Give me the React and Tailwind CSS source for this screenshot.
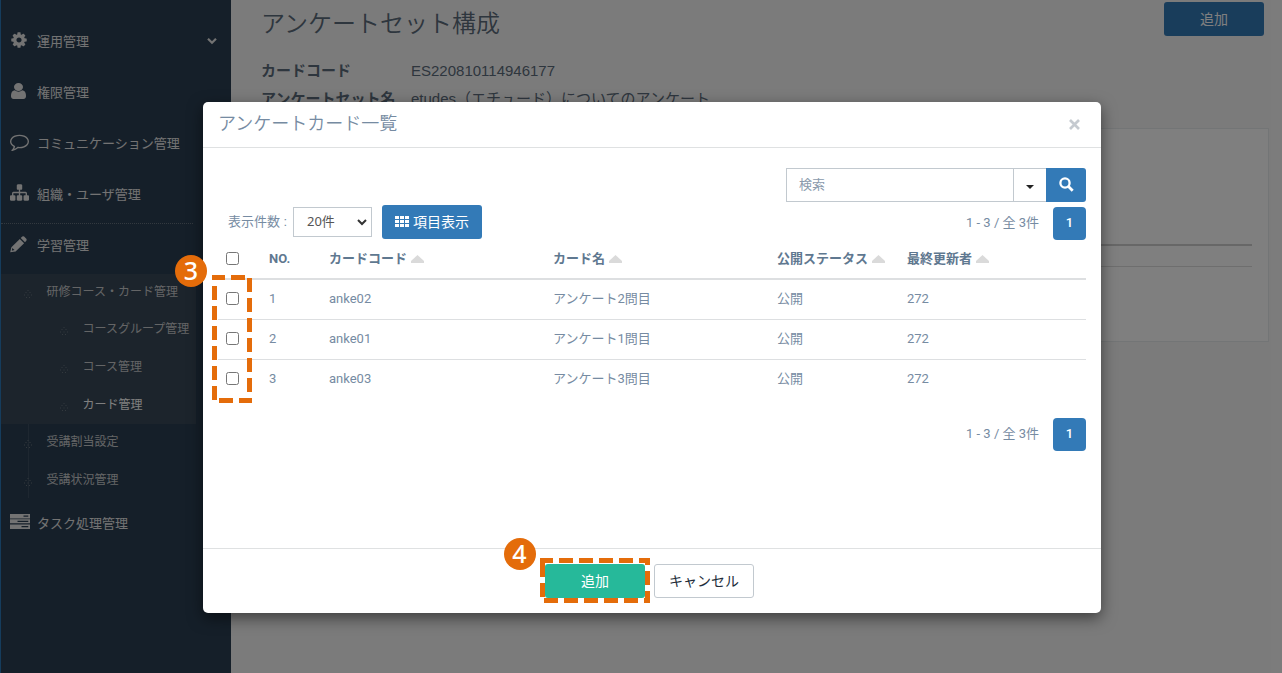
import React from 'react';

const JP = "font-['Liberation_Sans','Noto_Sans_CJK_JP',sans-serif]";

const ICONS = {
  cog: {
    box: '0 0 1792 1792',
    size: 'h-[18px] w-[18px]',
    d: 'M1152 896q0-106-75-181t-181-75-181 75-75 181 75 181 181 75 181-75 75-181zm512-109v222q0 12-8 23t-20 13l-185 28q-19 54-39 91 35 50 107 138 10 12 10 25t-9 23q-27 37-99 108t-94 71q-12 0-26-9l-138-108q-44 23-91 38-16 136-29 186-7 28-36 28h-222q-14 0-24.5-8.5t-11.5-21.5l-28-184q-49-16-90-37l-141 107q-10 9-25 9-14 0-25-11-126-114-165-168-7-10-7-23 0-12 8-23 15-21 51-66.5t54-70.5q-27-50-41-99l-183-27q-13-2-21-12.5t-8-23.5v-222q0-12 8-23t19-13l186-28q14-46 39-92-40-57-107-138-10-12-10-24 0-10 9-23 26-36 98.5-107.5t94.5-71.5q13 0 26 10l138 107q44-23 91-38 16-136 29-186 7-28 36-28h222q14 0 24.5 8.5t11.5 21.5l28 184q49 16 90 37l142-107q9-9 24-9 13 0 25 10 129 119 165 170 7 8 7 22 0 12-8 23-15 21-51 66.5t-54 70.5q26 50 41 98l183 28q13 2 21 12.5t8 23.5z',
  },
  user: {
    box: '256 128 1280 1536',
    size: 'ml-px h-4 w-[15px]',
    d: 'M1536 1399q0 109-62.5 187t-150.5 78h-854q-88 0-150.5-78t-62.5-187q0-85 8.5-160.500t31.500-152 58.500-131 94-89 134.500-34.500q131 128 313 128t313-128q76 0 134.500 34.500t94 89 58.500 131 31.500 152 8.500 160.500zm-256-887q0 159-112.500 271.500t-271.500 112.500-271.500-112.500-112.500-271.500 112.500-271.500 271.500-112.500 271.500 112.500 112.500 271.500z',
  },
  comment: {
    box: '0 0 1792 1792',
    size: 'h-[19px] w-[19px]',
    d: 'M896 384q-204 0-381.500 69.500t-282 187.500-104.500 255q0 112 71.500 213.500t201.500 175.500l87 50-27 96q-24 91-70 172 152-63 275-171l43-38 57 6q69 8 130 8 204 0 381.500-69.500t282-187.500 104.500-255-104.500-255-282-187.500-381.500-69.500zm896 512q0 174-120 321.500t-326 233-450 85.500q-70 0-145-8-198 175-460 242-49 14-114 22h-5q-15 0-27-10.500t-16-27.500v-1q-3-4-.5-12t2-10 4.500-9.500l6-9 7-8.500 8-9q7-8 31-34.500t34.500-38 31-39.500 32.500-51 27-59 26-76q-157-89-247.500-220t-90.500-281q0-174 120-321.500t326-233 450-85.500 450 85.500 326 233 120 321.500z',
  },
  sitemap: {
    box: '0 0 1792 1792',
    size: 'h-[19px] w-[19px]',
    d: 'M1792 1248v320q0 40-28 68t-68 28h-320q-40 0-68-28t-28-68v-320q0-40 28-68t68-28h96v-192h-512v192h96q40 0 68 28t28 68v320q0 40-28 68t-68 28h-320q-40 0-68-28t-28-68v-320q0-40 28-68t68-28h96v-192h-512v192h96q40 0 68 28t28 68v320q0 40-28 68t-68 28h-320q-40 0-68-28t-28-68v-320q0-40 28-68t68-28h96v-192q0-52 38-90t90-38h512v-192h-96q-40 0-68-28t-28-68v-320q0-40 28-68t68-28h320q40 0 68 28t28 68v320q0 40-28 68t-68 28h-96v192h512q52 0 90 38t38 90v192h96q40 0 68 28t28 68z',
  },
  pencil: {
    box: '0 0 17 17',
    size: 'h-[17px] w-[17px]',
    d: 'M.2 16.200 1.400 11.200 9.800 2.900 14.100 7.200 5.600 15.500ZM2.300 12.100 1.800 14.700 4.500 14.100ZM10.700 2 12.300.5Q13.200-.2 14.100.5L16.300 2.700Q17 3.700 16.300 4.700L15 6.300Z',
  },
  tasks: {
    box: '0 0 20 18',
    size: 'h-[18px] w-5',
    d: 'M0 1h20v4.500H0ZM13.500 2.600v1.200h4.800V2.600ZM0 6.300h20v4H0ZM7.500 7.700v1.200h10.800V7.700ZM0 11.500h20v4.500H0ZM11.500 13.100v1.200h6.800v-1.200Z',
  },
};

function NavIcon({ name }) {
  const { box, size, d } = ICONS[name];
  return (
    <svg viewBox={box} preserveAspectRatio="none" className={`shrink-0 ${size}`} fill="currentColor" fillRule="evenodd">
      <path d={d} />
    </svg>
  );
}

function NavItem({ icon, label, chevron, height = 'h-[51px]' }) {
  return (
    <li className={`flex items-center pl-[10px] pr-[14px] ${height}`}>
      <span className="flex w-[27px] items-center pb-[4px]">
        <NavIcon name={icon} />
      </span>
      <span className="grow">{label}</span>
      {chevron && (
        <svg viewBox="0 0 10 8" className="mb-px h-2 w-[10px]" fill="none" stroke="currentColor" strokeWidth="2.200">
          <path d="M1 1.800 5 5.800 9 1.800" />
        </svg>
      )}
    </li>
  );
}

function Dot() {
  return (
    <svg viewBox="0 0 8 8" className="mt-1 h-2 w-2 shrink-0" fill="#66727d">
      <path d="M3.500 0h1v1h-1ZM1.500 2h1v1h-1ZM5.500 2h1v1h-1ZM0 4.500h1v1H0ZM3.500 4.500h1v1h-1ZM7 4.500h1v1H7ZM2 7h1v1H2ZM5 7h1v1H5Z" />
    </svg>
  );
}

function SubItem({ label, deep, active, height }) {
  return (
    <li className={`flex items-center ${height} ${deep ? 'pl-[59px]' : 'pl-[23px]'} ${active ? 'text-[#fff]' : 'text-[#c8cacc]'}`}>
      <Dot />
      <span className="whitespace-nowrap pl-[14.500px] text-[12px]">{label}</span>
    </li>
  );
}

function Sidebar() {
  return (
    <aside className="w-[231px] shrink-0 border-l border-[#2a79b8] bg-[#2b3f53] pt-4 text-[13px] text-[#e6e6e6]">
      <ul className="-ml-px">
        <NavItem icon="cog" label="運用管理" chevron />
        <NavItem icon="user" label="権限管理" />
        <NavItem icon="comment" label="コミュニケーション管理" />
        <NavItem icon="sitemap" label="組織・ユーザ管理" />
      </ul>
      <div className="mt-[3px] w-[192px] border-t border-dotted border-[#67737f]" />
      <ul className="-ml-px">
        <NavItem icon="pencil" label="学習管理" height="h-[50px] pb-[6px]" />
      </ul>
      <ul className="h-[150px] w-[195px] bg-[#394858]">
        <SubItem label="研修コース・カード管理" height="h-[36px]" />
        <SubItem label="コースグループ管理" deep height="h-[38px]" />
        <SubItem label="コース管理" deep height="h-[38px]" />
        <SubItem label="カード管理" deep active height="h-[38px]" />
      </ul>
      <ul className="h-[74px] bg-[linear-gradient(#3c4e61,#3c4e61)] bg-[length:1px_100%] bg-[position:27px_0] bg-no-repeat">
        <SubItem label="受講割当設定" height="h-[36px]" />
        <SubItem label="受講状況管理" height="h-[40px]" />
      </ul>
      <ul className="-ml-px">
        <NavItem icon="tasks" label="タスク処理管理" />
      </ul>
    </aside>
  );
}

function Page() {
  return (
    <main className="min-w-0 grow bg-[#f7f7f7] pl-[30px] pr-[13px] text-[#5c6c7c]">
      <div className="flex h-[60px] items-start justify-between">
        <h1 className="pt-[6px] text-[24px] font-[350] leading-[36px]">アンケートセット構成</h1>
        <button className="mr-[5px] mt-[2px] h-[34px] w-[100px] rounded-[3px] bg-[#337ab7] text-[14px] text-white">追加</button>
      </div>
      <dl className="grid h-[68px] grid-cols-[150px_1fr] content-start text-[15px] leading-[22px]">
        <dt className="mb-[6px] font-bold">カードコード</dt>
        <dd>ES220810114946177</dd>
        <dt className="whitespace-nowrap font-bold">アンケートセット名</dt>
        <dd>etudes（エチュード）についてのアンケート</dd>
      </dl>
      <section className="h-[214px] border border-[#e7eaec] bg-white px-4 pt-[115px]">
        <div className="h-[23px] border-b border-t-2 border-b-[#dddddd] border-t-[#cfcfcf]" />
      </section>
    </main>
  );
}

function Checkbox() {
  return <span className="block h-[13px] w-[13px] rounded-[2.500px] border border-[#767676] bg-white" />;
}

function SortMark() {
  return (
    <svg viewBox="0 0 13 8" className="ml-1 inline-block h-2 w-[13px]" fill="#dadada">
      <path d="M6.500 0 13 6v2H0V6Z" />
    </svg>
  );
}

function Pager() {
  return (
    <div className="flex h-[33px] items-center justify-end">
      <span className="mb-[2px] mr-[14px] font-['Roboto','Noto_Sans_CJK_JP',sans-serif]">1 - 3 / 全 3件</span>
      <button className="h-[33px] w-[33px] rounded-[4px] bg-[#337ab7] pb-[2px] font-['Roboto',sans-serif] font-medium text-white">1</button>
    </div>
  );
}

const COLS = 'grid grid-cols-[43px_60px_224px_224px_130px_187px] items-center [&>*]:pl-2';
const ROWS = [
  ['1', 'anke02', 'アンケート2問目'],
  ['2', 'anke01', 'アンケート1問目'],
  ['3', 'anke03', 'アンケート3問目'],
];

function CardTable() {
  return (
    <div className="font-['Roboto','Noto_Sans_CJK_JP',sans-serif]">
      <div className={`${COLS} h-[40px] border-b-2 border-[#dddfe1] pb-px font-bold text-[#5f7890]`}>
        <span><Checkbox /></span>
        <span>NO.</span>
        <span>カードコード<SortMark /></span>
        <span>カード名<SortMark /></span>
        <span>公開ステータス<SortMark /></span>
        <span>最終更新者<SortMark /></span>
      </div>
      {ROWS.map(([no, code, name], i) => (
        <div key={no} className={`${COLS} h-[40px] border-b pb-[2px] ${i < 2 ? 'border-[#dddfe1]' : 'border-transparent'}`}>
          <span><Checkbox /></span>
          <span>{no}</span>
          <span>{code}</span>
          <span>{name}</span>
          <span>公開</span>
          <span>272</span>
        </div>
      ))}
    </div>
  );
}

function Dialog() {
  return (
    <div
      role="dialog"
      className="absolute left-[203px] top-[102px] flex h-[511px] w-[898px] flex-col rounded-[5px] bg-white text-[13px] text-[#768ba2] shadow-[0_5px_15px_rgba(0,0,0,0.5)]"
    >
      <header className="flex h-[46px] shrink-0 items-center justify-between border-b border-[#dfe1e2] pl-[15px] pr-[21px]">
        <h2 className="pb-px text-[18px] font-[350] leading-[26px]">アンケートカード一覧</h2>
        <svg viewBox="0 0 11 11" className="h-[11px] w-[11px]" stroke="#c5cad0" strokeWidth="2.700">
          <path d="M1 1 10 10M10 1 1 10" />
        </svg>
      </header>
      <div className="grow px-[15px] pt-5">
        <div className="ml-auto flex h-[34px] w-[300px] overflow-hidden rounded-r-[3px]">
          <div className="flex w-[228px] items-center border border-[#c2c9cf] pl-3 text-[#8a9aac]">検索</div>
          <div className="flex w-8 items-center justify-center border-y border-[#c2c9cf] pt-[3px]">
            <svg viewBox="0 0 8 4" className="h-1 w-2" fill="#222"><path d="M0 0h8L4 4Z" /></svg>
          </div>
          <button className="flex w-10 items-center justify-center bg-[#337ab7] pb-[2px]">
            <svg viewBox="0 0 15 15" className="h-[15px] w-[15px]" fill="none" stroke="#fff">
              <circle cx="6" cy="6" r="4.600" strokeWidth="2.300" />
              <path d="m9.500 9.500 4.200 4.200" strokeWidth="2.800" />
            </svg>
          </button>
        </div>
        <div className="flex h-[38px] items-start justify-between pt-[3px]">
          <div className="flex items-center pl-[9px]">
            <span className="w-[66px] whitespace-nowrap pl-px">表示件数 :</span>
            <div className="flex h-[30px] w-[79px] items-center justify-between border border-[#c2c9cf] pl-[13px] pr-1 font-['Noto_Sans','Noto_Sans_CJK_JP',sans-serif] text-[#555]">
              20件
              <svg viewBox="0 0 10 7" className="h-[7px] w-[10px]" fill="none" stroke="#333" strokeWidth="2"><path d="M1 1 5 5 9 1" /></svg>
            </div>
            <button className="ml-[10px] flex h-[34px] w-[100px] items-center justify-center gap-1 rounded-[3px] bg-[#337ab7] text-[14px] text-white">
              <svg viewBox="0 0 14 11" className="mb-px h-[11px] w-[14px]" fill="#fff">
                <path d="M0 0h4v3H0ZM5 0h4v3H5ZM10 0h4v3h-4ZM0 4h4v3H0ZM5 4h4v3H5ZM10 4h4v3h-4ZM0 8h4v3H0ZM5 8h4v3H5ZM10 8h4v3h-4Z" />
              </svg>
              項目表示
            </button>
          </div>
          <div className="pt-[2px]"><Pager /></div>
        </div>
        <CardTable />
        <div className="pt-[18px]"><Pager /></div>
      </div>
      <footer className="flex h-[65px] shrink-0 justify-center gap-[9px] border-t border-[#dfe1e2] pr-[5px] pt-[15px] text-[14px]">
        <button className="h-[34px] w-[100px] rounded-[3px] bg-[#26b99a] text-white">追加</button>
        <button className="h-[34px] w-[100px] rounded-[3px] border border-[#c2c9cf] bg-white text-[#222d3a]">キャンセル</button>
      </footer>
    </div>
  );
}

function Callouts() {
  return (
    <>
      <svg className="absolute left-[212px] top-[275px] h-[128px] w-10" viewBox="0 0 40 128" fill="none" stroke="#e46c0a" strokeWidth="5">
        <path d="M0 2.500h13M19 2.500h14" />
        <path d="M2.500 11V125" strokeDasharray="14 6" />
        <path d="M37.500 3V117" strokeDasharray="14 6" />
        <path d="M7 125.500h14M27 125.500h13" />
      </svg>
      <svg className="absolute left-[540px] top-[558px] h-[45px] w-[110px]" viewBox="0 0 110 45" fill="none" stroke="#e46c0a" strokeWidth="5">
        <path d="M0 2.500h13M19 2.500H110" strokeDasharray="14 6" />
        <path d="M107.500 0v7M107.500 13v14M107.500 33v12" />
        <path d="M4 42.500H110" strokeDasharray="14 6" />
        <path d="M2.500 0v19M2.500 25v14" />
      </svg>
      <span className="absolute left-[175px] top-[255px] flex h-8 w-8 items-center justify-center rounded-full bg-[#e46c0a] pb-[2px] font-['Noto_Sans',sans-serif] text-[25px] font-medium leading-none text-white">3</span>
      <span className="absolute left-[504px] top-[538px] flex h-8 w-8 items-center justify-center rounded-full bg-[#e46c0a] pb-[2px] pr-px font-['Noto_Sans',sans-serif] text-[25px] font-medium leading-none text-white">4</span>
    </>
  );
}

export default function App() {
  return (
    <div className={`relative flex h-[673px] w-[1282px] overflow-hidden ${JP}`}>
      <Sidebar />
      <Page />
      <div className="absolute inset-0 bg-black/50" />
      <Dialog />
      <Callouts />
    </div>
  );
}
